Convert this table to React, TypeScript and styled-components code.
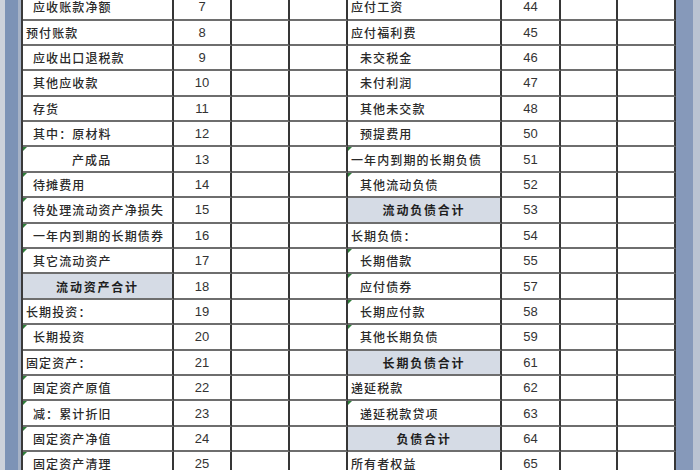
import React from 'react';
import styled, { createGlobalStyle } from 'styled-components';

const Global = createGlobalStyle`
  html, body { margin: 0; padding: 0; background: #fff; overflow: hidden; }
  #root { width: 700px; height: 470px; overflow: hidden; }
`;

const Page = styled.div`
  display: flex;
  width: 700px;
  height: 470px;
  overflow: hidden;
  background: #fff;
`;

const LeftFrame = styled.div`
  width: 23px;
  flex: none;
  background: linear-gradient(
    to right,
    #cdd2db 0 5px,
    #7d93b6 5px 18px,
    #a6b2c6 18px 21px,
    #3a3a3a 21px 23px
  );
`;

const RightFrame = styled.div`
  width: 24px;
  flex: none;
  background: linear-gradient(to right, #8699ba 0 17px, #bac3d2 17px);
`;

const Sheet = styled.div`
  display: grid;
  grid-template-columns: 151px 58px 58px 58px 154px 59px 57px 58px;
  grid-auto-rows: 25.4px;
  margin-top: -4.9px;
  align-self: flex-start;
  font-family: "Noto Sans CJK SC", "Liberation Sans", sans-serif;
  color: #2a2a2a;
`;

const Cell = styled.div`
  position: relative;
  box-sizing: border-box;
  border-right: 2px solid #363636;
  border-bottom: 2px solid #6e6e6e;
  display: flex;
  align-items: center;
  overflow: hidden;
  white-space: nowrap;
`;

const NameCell = styled(Cell)<{ $pad: number; $total?: boolean }>`
  padding-left: ${(p) => (p.$total ? 0 : p.$pad)}px;
  justify-content: ${(p) => (p.$total ? 'center' : 'flex-start')};
  background: ${(p) => (p.$total ? '#d5dbe5' : '#fff')};
  font-size: 12px;
  letter-spacing: ${(p) => (p.$total ? 1.8 : 1.1)}px;
  font-weight: ${(p) => (p.$total ? 700 : 500)};
  color: ${(p) => (p.$total ? '#1e1e1e' : '#2a2a2a')};
`;

const NumCell = styled(Cell)`
  justify-content: center;
  font-family: "Liberation Sans", Arial, sans-serif;
  font-size: 13px;
  color: #333;
`;

const Flag = styled.span`
  position: absolute;
  left: 0;
  top: 0;
  width: 0;
  height: 0;
  border-top: 4px solid #2f7d3a;
  border-right: 4px solid transparent;
`;

type Row = { name: string; no: number; indent: number; total?: boolean; flag?: boolean };

const left: Row[] = [
  { name: '应收账款净额', no: 7, indent: 1 },
  { name: '预付账款', no: 8, indent: 0 },
  { name: '应收出口退税款', no: 9, indent: 1 },
  { name: '其他应收款', no: 10, indent: 1 },
  { name: '存货', no: 11, indent: 1 },
  { name: '其中：原材料', no: 12, indent: 1 },
  { name: '产成品', no: 13, indent: 2, flag: true },
  { name: '待摊费用', no: 14, indent: 1, flag: true },
  { name: '待处理流动资产净损失', no: 15, indent: 1, flag: true },
  { name: '一年内到期的长期债券', no: 16, indent: 1, flag: true },
  { name: '其它流动资产', no: 17, indent: 1, flag: true },
  { name: '流动资产合计', no: 18, indent: 0, total: true },
  { name: '长期投资：', no: 19, indent: 0 },
  { name: '长期投资', no: 20, indent: 1, flag: true },
  { name: '固定资产：', no: 21, indent: 0 },
  { name: '固定资产原值', no: 22, indent: 1, flag: true },
  { name: '减：累计折旧', no: 23, indent: 1, flag: true },
  { name: '固定资产净值', no: 24, indent: 1, flag: true },
  { name: '固定资产清理', no: 25, indent: 1, flag: true },
];

const right: Row[] = [
  { name: '应付工资', no: 44, indent: 0 },
  { name: '应付福利费', no: 45, indent: 0 },
  { name: '未交税金', no: 46, indent: 1 },
  { name: '未付利润', no: 47, indent: 1 },
  { name: '其他未交款', no: 48, indent: 1 },
  { name: '预提费用', no: 50, indent: 1 },
  { name: '一年内到期的长期负债', no: 51, indent: 0, flag: true },
  { name: '其他流动负债', no: 52, indent: 1, flag: true },
  { name: '流动负债合计', no: 53, indent: 0, total: true },
  { name: '长期负债：', no: 54, indent: 0 },
  { name: '长期借款', no: 55, indent: 1, flag: true },
  { name: '应付债券', no: 57, indent: 1, flag: true },
  { name: '长期应付款', no: 58, indent: 1, flag: true },
  { name: '其他长期负债', no: 59, indent: 1, flag: true },
  { name: '长期负债合计', no: 61, indent: 0, total: true },
  { name: '递延税款', no: 62, indent: 0 },
  { name: '递延税款贷项', no: 63, indent: 1, flag: true },
  { name: '负债合计', no: 64, indent: 0, total: true },
  { name: '所有者权益', no: 65, indent: 0 },
];

const leftPad = [3, 10, 49];
const rightPad = [3, 12, 49];

export default function App() {
  return (
    <>
      <Global />
      <Page>
        <LeftFrame />
        <Sheet>
          {left.map((l, i) => {
            const r = right[i];
            return (
              <React.Fragment key={i}>
                <NameCell $pad={leftPad[l.indent]} $total={l.total}>
                  {l.flag && <Flag />}
                  {l.name}
                </NameCell>
                <NumCell>{l.no}</NumCell>
                <Cell />
                <Cell />
                <NameCell $pad={rightPad[r.indent]} $total={r.total}>
                  {r.flag && <Flag />}
                  {r.name}
                </NameCell>
                <NumCell>{r.no}</NumCell>
                <Cell />
                <Cell />
              </React.Fragment>
            );
          })}
        </Sheet>
        <RightFrame />
      </Page>
    </>
  );
}
